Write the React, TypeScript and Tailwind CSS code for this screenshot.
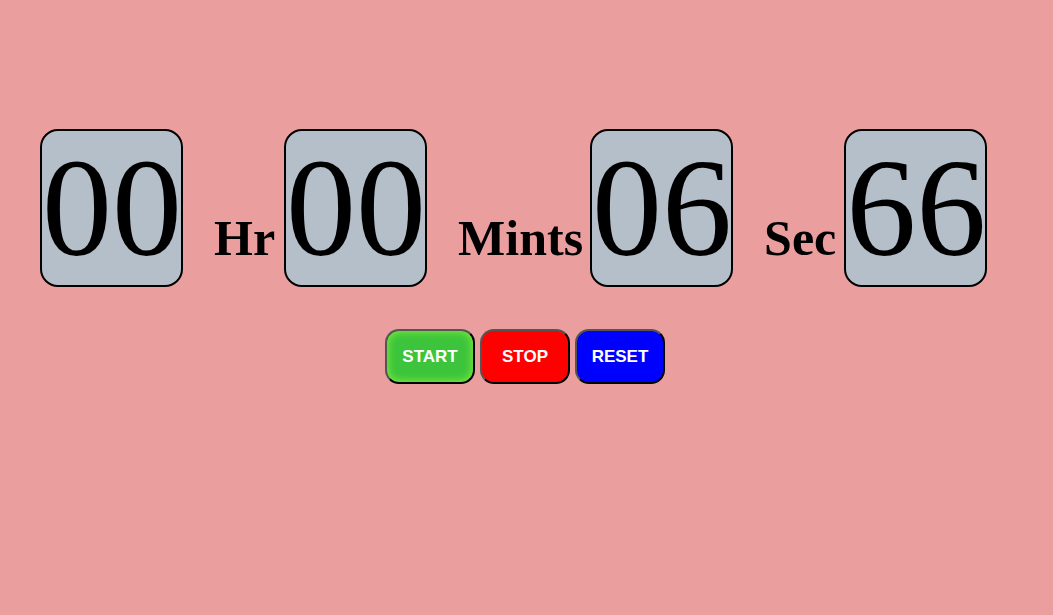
import React from "react";

const Box = ({ v }: { v: string }) => (
  <div className="w-[143px] h-[158px] border-2 border-black rounded-[18px] bg-[#b4bfc9] text-[140px] leading-[153px] text-black text-center overflow-hidden whitespace-nowrap" style={{ fontFamily: '"Liberation Serif", "Times New Roman", serif' }}>
    {v}
  </div>
);

const Label = ({ t, mr }: { t: string; mr: string }) => (
  <span className={`ml-[31px] text-[50px] font-bold text-black leading-none ${mr}`} style={{ fontFamily: '"Liberation Serif", "Times New Roman", serif' }}>
    {t}
  </span>
);

export default function App() {
  return (
    <div className="w-full min-h-[615px] bg-[#ea9e9e] pt-[129px]">
      <div className="flex items-baseline pl-[40px]">
        <Box v="00" />
        <Label t="Hr" mr="mr-[9px]" />
        <Box v="00" />
        <Label t="Mints" mr="mr-[7px]" />
        <Box v="06" />
        <Label t="Sec" mr="mr-[8px]" />
        <Box v="66" />
      </div>
      <div className="flex justify-center gap-[5px] mt-[42px] pr-[3px]" style={{ fontFamily: '"Liberation Sans", Arial, sans-serif' }}>
        <button className="w-[90px] h-[55px] rounded-[14px] border-2 border-t-[#555] border-l-[#555] border-b-black border-r-black bg-[#3cc43c] shadow-[inset_0_0_10px_#8cf23a] text-white font-bold text-[17px]">
          START
        </button>
        <button className="w-[90px] h-[55px] rounded-[14px] border-2 border-t-[#555] border-l-[#555] border-b-black border-r-black bg-[#ff0000] text-white font-bold text-[17px]">
          STOP
        </button>
        <button className="w-[90px] h-[55px] rounded-[14px] border-2 border-t-[#555] border-l-[#555] border-b-black border-r-black bg-[#0000ff] text-white font-bold text-[17px]">
          RESET
        </button>
      </div>
    </div>
  );
}
